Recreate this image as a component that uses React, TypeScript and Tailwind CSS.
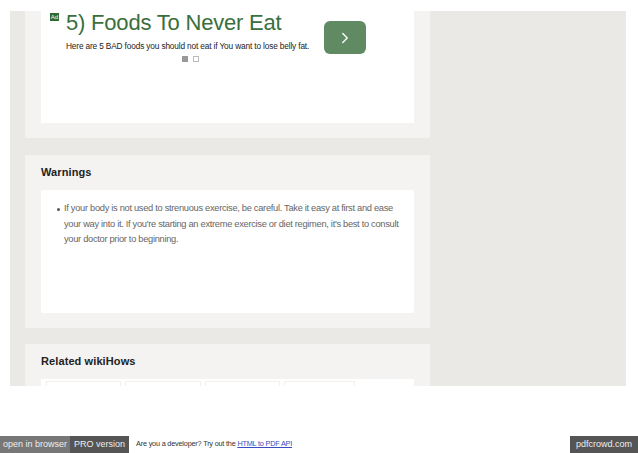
import { ChevronRight } from 'lucide-react';

const font = { fontFamily: '"Liberation Sans", Arial, sans-serif' };

export default function App() {
  return (
    <div className="w-[638px] h-[453px] bg-white overflow-hidden flex flex-col" style={font}>
      <div className="h-[11px] shrink-0" />

      {/* Page body */}
      <div className="ml-[10px] w-[616px] h-[375px] bg-[#ebe9e5] overflow-hidden pl-[15px] shrink-0">
        {/* Ad card */}
        <div className="w-[405px] h-[127px] bg-[#f4f3f1] px-[16px]">
          <div className="h-[112px] bg-white relative">
            <div className="absolute left-[9px] top-[2px] w-[9px] h-[8px] bg-[#2f6b33] text-[6px] leading-[8px] text-white text-center">Ad</div>
            <div className="pl-[25px] flex">
              <div className="w-[258px]">
                <div className="text-[22px] leading-[24px] text-[#3a6f3d] tracking-[-0.2px]">5) Foods To Never Eat</div>
                <div className="text-[8.3px] leading-[10px] text-[#222] mt-[6px] tracking-[-0.15px] whitespace-nowrap">Here are 5 BAD foods you should not eat if You want to lose belly fat.</div>
                <div className="flex gap-[5px] mt-[5px] ml-[116px]">
                  <span className="w-[6px] h-[6px] bg-[#999]" />
                  <span className="w-[6px] h-[6px] border border-[#bbb]" />
                </div>
              </div>
              <div className="w-[42px] h-[33px] mt-[10px] rounded-[6px] bg-[#5f8a62] flex items-center justify-center">
                <ChevronRight className="w-[18px] h-[18px] text-white" strokeWidth={1.8} />
              </div>
            </div>
          </div>
        </div>

        {/* Warnings */}
        <div className="w-[405px] h-[173px] bg-[#f4f3f1] mt-[17px] px-[16px] pt-[9px]">
          <h2 className="text-[11px] leading-[16px] font-bold text-[#222] h-[26px] tracking-[0.1px]">Warnings</h2>
          <div className="h-[123px] bg-white rounded-[2px] pl-[16px] pr-[8px] pt-[11px]">
            <div className="flex gap-[4px] text-[9.3px] leading-[15.5px] text-[#666] tracking-[-0.3px]">
              <span className="w-[3px] h-[3px] rounded-full bg-[#555] mt-[7px] shrink-0" />
              <p className="ml-[0px]">
                If your body is not used to strenuous exercise, be careful. Take it easy at first and ease your way into it. If you're starting an extreme exercise or diet regimen, it's best to consult your doctor prior to beginning.
              </p>
            </div>
          </div>
        </div>

        {/* Related */}
        <div className="w-[405px] h-[60px] bg-[#f4f3f1] mt-[16px] px-[16px] pt-[9px]">
          <h2 className="text-[11px] leading-[16px] font-bold text-[#222] h-[26px] tracking-[0.1px]">Related wikiHows</h2>
          <div className="h-[40px] bg-white px-[5px] pt-[2px] flex gap-[4px]">
            <div className="w-[75px] h-[40px] border border-[#f1f0ee]" />
            <div className="w-[76px] h-[40px] border border-[#f1f0ee]" />
            <div className="w-[75px] h-[40px] border border-[#f1f0ee]" />
            <div className="w-[71px] h-[40px] border border-[#f1f0ee]" />
          </div>
        </div>
      </div>

      <div className="h-[50px] shrink-0" />

      {/* pdfcrowd footer */}
      <div className="h-[17px] flex items-center shrink-0">
        <div className="h-full bg-[#777] text-[#eee] px-[3px] flex items-center text-[9px]">open in browser</div>
        <div className="h-full bg-[#555] text-[#eee] px-[4px] flex items-center text-[9px]">PRO version</div>
        <div className="ml-[7px] text-[#333] text-[7.3px] tracking-[-0.2px]">
          Are you a developer? Try out the <span className="text-[#3b4cc0] underline">HTML to PDF API</span>
        </div>
        <div className="ml-auto h-full bg-[#555] text-[#eee] px-[6px] flex items-center text-[9px]">pdfcrowd.com</div>
      </div>
    </div>
  );
}
